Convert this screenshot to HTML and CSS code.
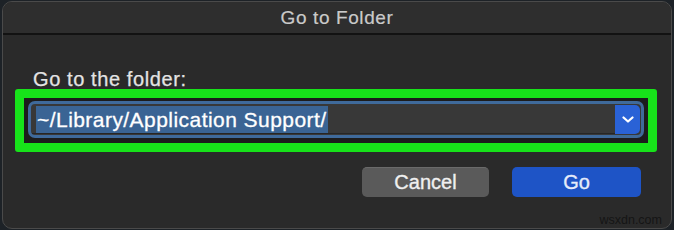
FILE: index.html
```html
<!DOCTYPE html>
<html lang="en">
<head>
    <meta charset="UTF-8">
    <title>Go to Folder</title>
    <link rel="stylesheet" href="styles.css">
</head>
<body>
    <div class="dialog">
        <div class="titlebar">Go to Folder</div>
        <div class="content">
            <div class="label">Go to the folder:</div>
            <div class="highlight-box">
                <div class="field-ring">
                    <div class="field"><span class="selected">~/Library/Application Support/</span></div>
                    <div class="dropdown">
                        <svg width="12" height="8" viewBox="0 0 12 8"><polyline points="1.5,1.5 6,5.5 10.5,1.5" fill="none" stroke="#fff" stroke-width="2.2" stroke-linecap="round" stroke-linejoin="round"/></svg>
                    </div>
                </div>
            </div>
            <div class="buttons">
                <div class="btn btn-cancel">Cancel</div>
                <div class="btn btn-go">Go</div>
            </div>
        </div>
        <div class="watermark">wsxdn.com</div>
    </div>
</body>
</html>
```

FILE: styles.css
```css
body {
    margin: 0;
    background-color: #1d2227;
    font-family: "Liberation Sans", Arial, sans-serif;
}

.dialog {
    position: relative;
    box-sizing: border-box;
    height: 228px;
    margin: 1px 2px;
    border: 1px solid #4a4a4a;
    border-radius: 10px;
    background-color: #2a2a2a;
    overflow: hidden;
}

.titlebar {
    height: 31px;
    line-height: 31px;
    text-align: center;
    background-color: #2e2e2e;
    border-bottom: 2px solid #121212;
    color: #cacaca;
    font-size: 19px;
    letter-spacing: 0.6px;
    -webkit-text-stroke: 0.2px #cacaca;
}

.content {
    padding: 0 14px 0 12px;
}

.label {
    margin-top: 34px;
    padding-left: 18px;
    line-height: 20px;
    font-size: 20px;
    letter-spacing: 0.6px;
    color: #e4e4e4;
    -webkit-text-stroke: 0.25px #e4e4e4;
}

.highlight-box {
    border: 9px solid #17e31a;
    border-bottom-width: 9px;
    border-radius: 3px;
    padding: 3px 4px 5px 4px;
    background-color: #1c1c1c;
}

.field-ring {
    display: flex;
    box-sizing: border-box;
    height: 37px;
    padding: 1px;
    border: 3px solid #3f6a9b;
    border-radius: 7px;
    background-color: #383838;
}

.field {
    flex: 1;
    padding: 1px 0 0 4px;
    border-bottom: 1px solid #262626;
}

.selected {
    display: inline-block;
    height: 27px;
    line-height: 27px;
    padding: 0 1px;
    background-color: #3a6494;
    color: #ffffff;
    font-size: 21px;
    letter-spacing: 0.45px;
    -webkit-text-stroke: 0.3px #ffffff;
}

.dropdown {
    width: 25px;
    display: flex;
    align-items: center;
    justify-content: center;
    background-color: #2a62d6;
    border-radius: 0 5px 5px 0;
}

.buttons {
    display: flex;
    justify-content: flex-end;
    gap: 23px;
    margin-top: 15px;
    padding-right: 16px;
}

.btn {
    height: 30px;
    line-height: 30px;
    text-align: center;
    font-size: 20px;
    border-radius: 5px;
    box-sizing: border-box;
}

.btn-cancel {
    width: 127px;
    background-color: #5a5a5a;
    border-top: 1px solid #6a6a6a;
    line-height: 28px;
    color: #f0f0f0;
    -webkit-text-stroke: 0.35px #f0f0f0;
}

.btn-go {
    width: 129px;
    background-color: #1e54c6;
    color: #e6ecfa;
    -webkit-text-stroke: 0.35px #e6ecfa;
}

.watermark {
    position: absolute;
    right: 9px;
    bottom: 1px;
    font-size: 12.5px;
    color: #151515;
}
```
